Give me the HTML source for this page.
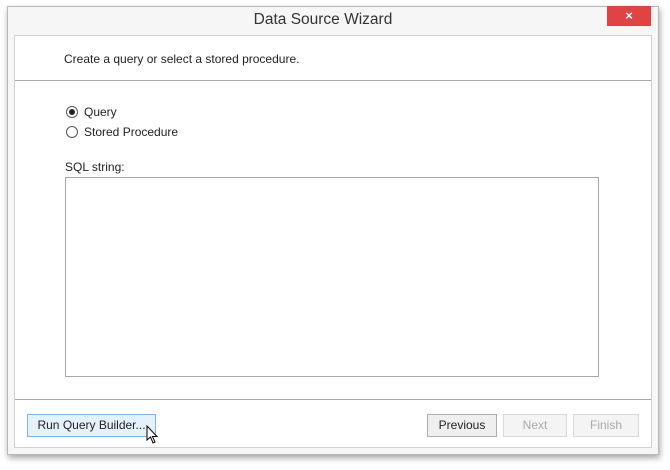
<!DOCTYPE html><html><head><style>
body{margin:0;width:670px;height:470px;background:#fff;font-family:"Liberation Sans",sans-serif;position:relative;overflow:hidden}
.a{position:absolute}
.win{left:7px;top:6px;width:652px;height:449px;background:#f6f6f6;border:1px solid #b8b8b8;box-shadow:1px 3px 6px rgba(0,0,0,.35);box-sizing:border-box}
.btn{position:absolute;top:414px;height:23px;box-sizing:border-box;border:1px solid #acacac;background:#efefef;font-size:12px;text-align:center;line-height:21px;color:#222}
.dis{color:#aaa;border-color:#d8d8d8;background:#f4f4f4}
.t{font-size:12px;color:#222}
.r{width:12px;height:12px;border:1px solid #555;border-radius:50%;box-sizing:border-box;background:#fff}
</style></head><body>
<div class="a win"></div>
<div class="a" style="left:607px;top:6px;width:44px;height:20px;background:#e04343;color:#fff;font-size:13px;font-weight:bold;text-align:center;line-height:19px">×</div>
<div class="a" style="left:0;width:646px;top:11px;text-align:center;font-size:15.5px;color:#333">Data Source Wizard</div>
<div class="a" style="left:14px;top:35px;width:638px;height:413px;background:#fff;border:1px solid #d0d0d0;box-sizing:border-box"></div>
<div class="a" style="left:15px;top:80px;width:636px;height:1px;background:#a8a8a8"></div>
<div class="a" style="left:15px;top:399px;width:636px;height:1px;background:#a8a8a8"></div>
<div class="a t" style="left:64px;top:52px">Create a query or select a stored procedure.</div>
<div class="a r" style="left:66px;top:106px"></div><div class="a" style="left:69px;top:109px;width:6px;height:6px;border-radius:50%;background:#222"></div>
<div class="a t" style="left:84px;top:105px">Query</div>
<div class="a r" style="left:66px;top:126px"></div>
<div class="a t" style="left:84px;top:125px">Stored Procedure</div>
<div class="a t" style="left:65px;top:160px">SQL string:</div>
<div class="a" style="left:65px;top:177px;width:534px;height:200px;border:1px solid #a8a8a8;box-sizing:border-box"></div>
<div class="btn" style="left:27px;width:129px;border-color:#7eb4ea;background:#e5f1fb">Run Query Builder...</div>
<div class="btn" style="left:427px;width:70px">Previous</div>
<div class="btn dis" style="left:503px;width:64px">Next</div>
<div class="btn dis" style="left:573px;width:66px">Finish</div>
<svg class="a" style="left:146px;top:425px" width="14" height="20" viewBox="0 0 14 20"><path d="M1 1 L1 15 L4.5 12 L7 18 L9 17 L6.5 11.5 L11 11.5 Z" fill="#fff" stroke="#000" stroke-width="1"/></svg>
</body></html>
